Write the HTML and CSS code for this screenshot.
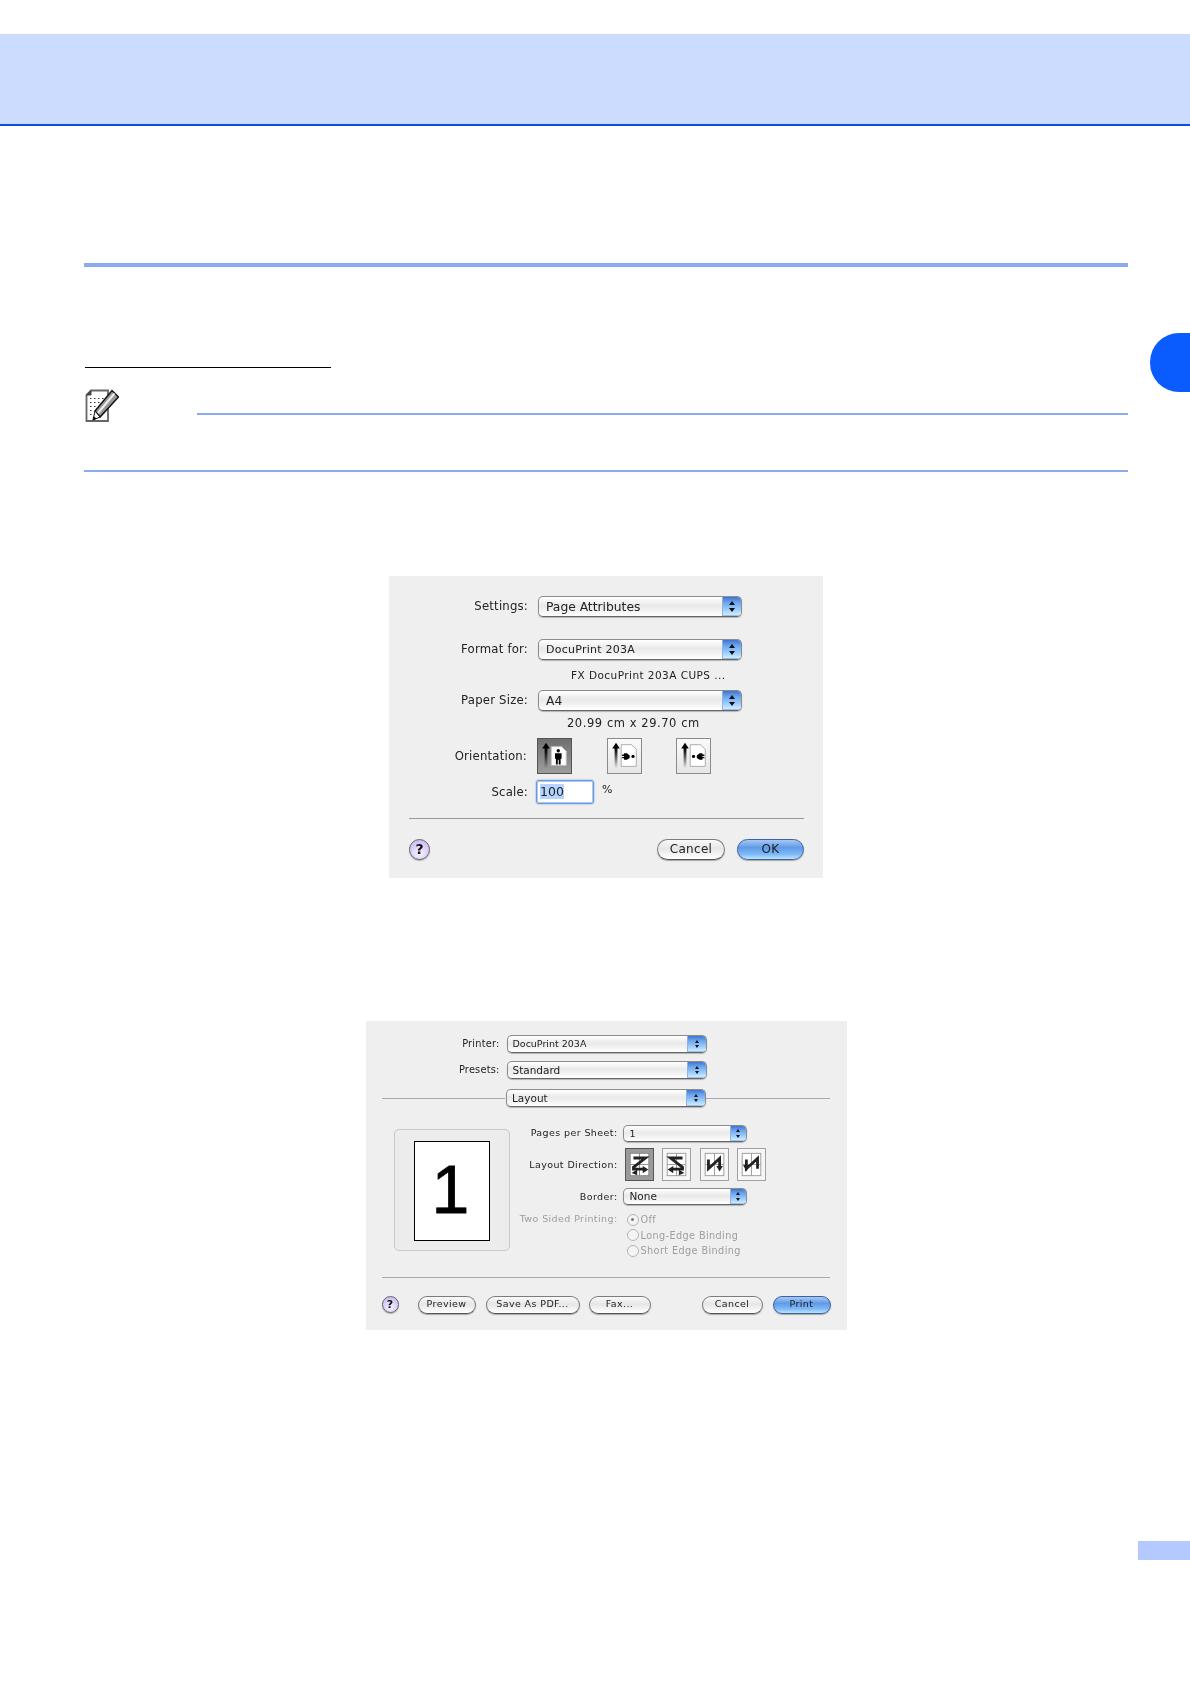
FILE: index.html
```html
<!DOCTYPE html>
<html lang="en">
<head>
<meta charset="utf-8">
<title>Page Setup and Print dialogs</title>
<link rel="stylesheet" href="styles.css">
</head>
<body>
<div class="page">
  <header class="banner"></header>
  <div class="side-tab"></div>
  <main class="content">
    <div class="rule-major"></div>
    <div class="heading-line"></div>
    <div class="note">
      <svg class="note-icon" viewBox="0 0 34 34" width="34" height="34">
        <path d="M6 1.500H23V32H1.500V6Z" fill="#fff" stroke="#666" stroke-width="1.800"/>
        <path d="M1.500 6H6V1.500Z" fill="#444" stroke="#444"/>
        <path d="M5 9.500h1.500M9 9.500h1.500M13 9.500h1.500M17 9.500h1.500M5 13.500h1.500M9 13.500h1.500M13 13.500h1.500M5 17.500h1.500M9 17.500h1.500M5 21.500h1.500M5 25.500h1.500" stroke="#333" stroke-width="1.200"/>
        <path d="M10 22L27 1.500L33.500 8L15 28Z" fill="#999" stroke="#111" stroke-width="1.500"/>
        <path d="M13 24L29.500 4.500" stroke="#eee" stroke-width="2"/>
        <path d="M10 22L15 28L8 31Z" fill="#fff" stroke="#111" stroke-width="1"/>
        <path d="M9 27.500L11.500 29.500L7.500 31.500Z" fill="#000"/>
      </svg>
      <div class="note-line"></div>
    </div>
    <div class="rule-minor"></div>

    <section class="dialog dialog-setup">
      <div class="row row-setup">
        <span class="label">Settings:</span>
        <div class="select select-lg"><span class="select-text">Page Attributes</span><span class="stepper"></span></div>
      </div>
      <div class="row row-setup row-format">
        <span class="label">Format for:</span>
        <div class="select select-lg select-thin"><span class="select-text">DocuPrint 203A</span><span class="stepper"></span></div>
      </div>
      <div class="printer-desc">FX DocuPrint 203A CUPS ...</div>
      <div class="row row-setup">
        <span class="label">Paper Size:</span>
        <div class="select select-lg"><span class="select-text">A4</span><span class="stepper"></span></div>
      </div>
      <div class="paper-desc">20.99 cm x 29.70 cm</div>
      <div class="row row-setup">
        <span class="label label-orient">Orientation:</span>
        <div class="orient-group">
          <svg class="orient orient-on" viewBox="0 0 35 36" width="35" height="36">
            <defs>
              <linearGradient id="fade" x1="0" y1="0" x2="0" y2="1"><stop offset="0.25" stop-color="#000"/><stop offset="1" stop-color="#000" stop-opacity="0"/></linearGradient>
            </defs>
            <path d="M7 31V10H4.500L8.500 4 12.500 10H10V31Z" fill="url(#fade)"/>
            <path d="M14 8H25L30 13V28H14Z" fill="#fff" stroke="#bbb"/>
            <circle cx="21.500" cy="12.500" r="1.800"/>
            <path d="M18 15H25V21H24V27H22V22H21V27H19V21H18Z"/>
          </svg>
          <svg class="orient" viewBox="0 0 35 36" width="35" height="36">
            <path d="M7 31V10H4.500L8.500 4 12.500 10H10V31Z" fill="url(#fade)"/>
            <path d="M14 6H25L30 11V29H14Z" fill="#fff" stroke="#aaa"/>
            <path d="M17 15H20L23 17.500V20L20 22H17V20.500H15V19H17V18H15V16.500H17Z"/>
            <circle cx="26.500" cy="18.500" r="1.700"/>
          </svg>
          <svg class="orient" viewBox="0 0 35 36" width="35" height="36">
            <path d="M7 31V10H4.500L8.500 4 12.500 10H10V31Z" fill="url(#fade)"/>
            <path d="M14 6H25L30 11V29H14Z" fill="#fff" stroke="#aaa"/>
            <path d="M27 15H24L21 17.500V20L24 22H27V20.500H29V19H27V18H29V16.500H27Z"/>
            <circle cx="17.500" cy="18.500" r="1.700"/>
          </svg>
        </div>
      </div>
      <div class="row row-setup row-scale">
        <span class="label label-scale">Scale:</span>
        <div class="scale-input"><span class="selection">100</span></div>
        <span class="percent">%</span>
      </div>
      <div class="separator sep-setup"></div>
      <div class="footer footer-setup">
        <span class="help help-lg">?</span>
        <span class="btn btn-lg btn-push">Cancel</span>
        <span class="btn btn-lg btn-default">OK</span>
      </div>
    </section>

    <section class="dialog dialog-print">
      <div class="row row-print">
        <span class="label">Printer:</span>
        <div class="select select-md select-thin"><span class="select-text">DocuPrint 203A</span><span class="stepper"></span></div>
      </div>
      <div class="row row-print row-presets">
        <span class="label">Presets:</span>
        <div class="select select-md"><span class="select-text">Standard</span><span class="stepper"></span></div>
      </div>
      <div class="pane-row">
        <span class="pane-line"></span>
        <div class="select select-md"><span class="select-text">Layout</span><span class="stepper"></span></div>
        <span class="pane-line"></span>
      </div>
      <div class="layout-body">
        <div class="preview"><div class="sheet">1</div></div>
        <div class="layout-form">
          <div class="row row-layout row-pages">
            <span class="label">Pages per Sheet:</span>
            <div class="select select-sm select-thin"><span class="select-text">1</span><span class="stepper"></span></div>
          </div>
          <div class="row row-layout row-dir">
            <span class="label">Layout Direction:</span>
            <div class="dir-group">
              <svg class="dir dir-on" viewBox="0 0 29 33" width="29" height="33">
                <rect x="4.500" y="4.500" width="20" height="24" fill="#fff" stroke="#888"/><path d="M14.500 4.500V28.500M4.500 16.500H24.500" stroke="#888"/>
                <path d="M8 9.500H21L8 19.500V21.500H19" fill="none" stroke="#222" stroke-width="3"/><path d="M18 18L24 22 18 26ZM12 22L6 25.500 12 28Z" fill="#222"/>
              </svg>
              <svg class="dir" viewBox="0 0 29 33" width="29" height="33">
                <rect x="4.500" y="4.500" width="20" height="24" fill="#fff" stroke="#999"/><path d="M14.500 4.500V28.500M4.500 16.500H24.500" stroke="#999"/>
                <path d="M21 9.500H8L21 19.500V21.500H10" fill="none" stroke="#222" stroke-width="3"/><path d="M11 18L5 22 11 26ZM17 22L23 25.500 17 28Z" fill="#222"/>
              </svg>
              <svg class="dir" viewBox="0 0 29 33" width="29" height="33">
                <rect x="4.500" y="4.500" width="20" height="24" fill="#fff" stroke="#999"/><path d="M14.500 4.500V28.500M4.500 16.500H24.500" stroke="#999"/>
                <path d="M8 11V21L20 10V20" fill="none" stroke="#222" stroke-width="3"/><path d="M16.500 18H23.500L20 24Z" fill="#222"/>
              </svg>
              <svg class="dir" viewBox="0 0 29 33" width="29" height="33">
                <rect x="4.500" y="4.500" width="20" height="24" fill="#fff" stroke="#999"/><path d="M14.500 4.500V28.500M4.500 16.500H24.500" stroke="#999"/>
                <path d="M21 21V10L9 21V11" fill="none" stroke="#222" stroke-width="3"/><path d="M5.500 18H12.500L9 25Z" fill="#222" transform="translate(0 -1)"/>
              </svg>
            </div>
          </div>
          <div class="row row-layout row-border">
            <span class="label">Border:</span>
            <div class="select select-sm"><span class="select-text">None</span><span class="stepper"></span></div>
          </div>
          <div class="row row-layout row-duplex">
            <span class="label label-off">Two Sided Printing:</span>
            <div class="radio-list">
              <div class="radio-item"><span class="radio radio-on"></span>Off</div>
              <div class="radio-item"><span class="radio"></span>Long-Edge Binding</div>
              <div class="radio-item"><span class="radio"></span>Short Edge Binding</div>
            </div>
          </div>
        </div>
      </div>
      <div class="separator sep-print"></div>
      <div class="footer footer-print">
        <span class="help help-sm">?</span>
        <span class="btn btn-sm btn-preview">Preview</span>
        <span class="btn btn-sm btn-pdf">Save As PDF...</span>
        <span class="btn btn-sm btn-fax">Fax...</span>
        <span class="btn btn-sm btn-cancel">Cancel</span>
        <span class="btn btn-sm btn-print btn-default">Print</span>
      </div>
    </section>
  </main>
  <div class="page-tab"></div>
</div>
</body>
</html>
```

FILE: styles.css
```css
* { box-sizing: border-box; }
html, body { margin: 0; background: #fff; }
.page {
  position: relative;
  width: 1190px;
  height: 1684px;
  overflow: hidden;
  padding-top: 34px;
  font-family: "DejaVu Sans", sans-serif;
  color: #222;
}
.banner {
  height: 92px;
  background: #cbdcff;
  border-bottom: 2px solid #0b4fe0;
}
.side-tab {
  position: absolute;
  top: 333px;
  right: 0;
  width: 40px;
  height: 59px;
  background: #0a5cff;
  border-radius: 29px 0 0 29px;
}
.page-tab {
  position: absolute;
  top: 1541px;
  right: 0;
  width: 52px;
  height: 19px;
  background: #b4c9ff;
}
.content { padding: 137px 62px 0 84px; }
.rule-major { height: 4px; background: #8aacee; }
.heading-line { width: 246px; height: 1px; margin: 100px 0 0 1px; background: #000; }
.note { display: flex; align-items: flex-start; height: 81px; margin-top: 21px; }
.note-icon { flex: none; margin-left: 1px; }
.note-line { flex: 1; height: 2px; margin: 24px 0 0 78px; background: #8aacee; }
.rule-minor { height: 2px; background: #8aacee; }

.dialog {
  margin: 0 auto;
  background: #efefef;
  filter: blur(0.35px);
}
.dialog-setup { width: 434px; height: 302px; margin-top: 104px; padding-top: 20px; font-size: 11.700px; }
.dialog-print { width: 481px; height: 309px; margin-top: 143px; padding-top: 14px; font-size: 9.500px; }

.row { display: flex; align-items: center; }
.label { flex: none; text-align: right; letter-spacing: 0.2px; }
.row-setup .label { width: 139px; margin-right: 10px; padding-bottom: 2px; }
.row-setup .label-orient { width: 138px; margin-right: 10px; padding-bottom: 0; }
.row-setup .label-scale { padding-bottom: 0; }
.row-format { margin-top: 22px; }
.printer-desc { height: 30px; padding-left: 182px; line-height: 30px; font-size: 10.500px; letter-spacing: 0.45px; }
.paper-desc { height: 27px; padding-left: 178px; line-height: 25px; font-size: 11.500px; letter-spacing: 0.55px; }

.select {
  position: relative;
  flex: none;
  display: flex;
  align-items: center;
  border: 1px solid #8c8c8c;
  border-bottom-color: #666;
  border-radius: 5px;
  background: linear-gradient(#fff 0, #e9e9e9 45%, #f2f2f2 70%, #fff 100%);
  box-shadow: 0 1px 1px rgba(0, 0, 0, 0.25);
  overflow: hidden;
}
.select-lg { width: 204px; height: 21px; font-size: 12.300px; }
.select-md { width: 200px; height: 18px; font-size: 10.500px; }
.select-sm { width: 124px; height: 17px; font-size: 10.500px; }
.select-thin { font-size: 11px; letter-spacing: 0.25px; }
.select-md.select-thin, .select-sm.select-thin { font-size: 9.500px; letter-spacing: 0; }
.select-text { flex: 1; padding-left: 7px; white-space: nowrap; }
.select-md .select-text { padding: 0 0 1px 5px; }
.select-sm .select-text { padding: 0 0 1px 6px; }
.stepper {
  position: relative;
  flex: none;
  align-self: stretch;
  width: 19px;
  border-left: 1px solid #8fb4e8;
  background: linear-gradient(#3f74cf 0, #6ea6ee 30%, #9accfb 65%, #cbe9ff 92%, #7fa8e0 100%);
}
.select-sm .stepper { width: 16px; }
.stepper::before, .stepper::after {
  content: "";
  position: absolute;
  left: 50%;
  margin-left: -3px;
  border-left: 3px solid transparent;
  border-right: 3px solid transparent;
}
.stepper::before { top: 22%; border-bottom: 4px solid #111; }
.stepper::after { bottom: 22%; border-top: 4px solid #111; }
.select-md .stepper::before, .select-md .stepper::after,
.select-sm .stepper::before, .select-sm .stepper::after { margin-left: -2px; border-left-width: 2px; border-right-width: 2px; }
.select-md .stepper::before, .select-sm .stepper::before { border-bottom-width: 3px; }
.select-md .stepper::after, .select-sm .stepper::after { border-top-width: 3px; }

.orient-group { display: flex; gap: 34.500px; }
.orient {
  flex: none;
  border: 1px solid #8a8a8a;
  background: linear-gradient(#fafafa, #e6e6e6);
}
.orient-on { border-color: #555; background: linear-gradient(#707070, #9c9c9c); }
.row-scale { margin-top: 6px; height: 24px; }
.scale-input {
  width: 58px;
  height: 24px;
  margin-left: -2px;
  padding: 3px 0 0 3px;
  background: #fff;
  border: 1px solid #6d9ad6;
  box-shadow: inset 0 0 0 1px #a9c9ef, 0 0 2px #6fa0e0;
  border-radius: 3px;
  font-size: 12.500px;
  line-height: 16px;
}
.selection { background: #b5d5ff; }
.percent { margin: -5px 0 0 8px; font-size: 11px; }

.separator { height: 1px; background: #999; }
.sep-setup { margin: 14px 19px 0 20px; }
.footer { display: flex; align-items: center; }
.footer-setup { margin: 20px 19px 0 20px; }
.help {
  flex: none;
  border: 1px solid #666;
  border-radius: 50%;
  background: radial-gradient(circle at 50% 70%, #f2ecff 10%, #c9b8f5 85%);
  box-shadow: 0 1px 1px rgba(0, 0, 0, 0.3);
  text-align: center;
  font-weight: 700;
  color: #111;
}
.help-lg { width: 21px; height: 21px; font-size: 14px; line-height: 19px; }
.help-sm { width: 17px; height: 17px; font-size: 11px; line-height: 15px; }
.btn {
  flex: none;
  border: 1px solid #7c7c7c;
  border-bottom-color: #555;
  border-radius: 11px;
  background: linear-gradient(#fafafa 0, #e6e6e6 45%, #f4f4f4 75%, #fff 100%);
  box-shadow: 0 1px 1px rgba(0, 0, 0, 0.3);
  text-align: center;
  white-space: nowrap;
}
.btn-lg { width: 68px; height: 21px; font-size: 12px; line-height: 19px; letter-spacing: 0.3px; }
.btn-push { margin-left: auto; }
.btn-lg.btn-default { width: 67px; margin-left: 12px; }
.btn-default {
  border-color: #3a62a8;
  background: linear-gradient(#a9c8f0 0, #5f9ae8 40%, #7fbaf6 75%, #bfe4ff 100%);
}
.btn-sm { height: 18px; font-size: 9.500px; line-height: 14px; letter-spacing: 0.4px; }
.btn-preview { width: 58px; margin-left: 19px; }
.btn-pdf { width: 94px; margin-left: 10px; }
.btn-fax { width: 62px; margin-left: 9px; }
.btn-cancel { width: 61px; margin-left: auto; }
.btn-print { width: 58px; margin-left: 10px; }

.row-print .label { width: 134px; margin-right: 7px; padding-bottom: 2px; font-size: 9.800px; }
.row-presets { margin-top: 8px; }
.pane-row { display: flex; align-items: center; margin: 10px 17px 0 16px; }
.pane-row .select { margin-left: 1px; }
.pane-line { flex: 1; height: 1px; background: #aaa; }
.layout-body { display: flex; align-items: flex-start; margin-top: 18px; padding-left: 28px; }
.preview {
  flex: none;
  display: flex;
  justify-content: center;
  width: 116px;
  height: 122px;
  margin-top: 4px;
  padding-top: 11px;
  border: 1px solid #c9c9c9;
  border-radius: 5px;
  background: #ececec;
}
.sheet {
  width: 76px;
  height: 100px;
  border: 1px solid #000;
  background: #fff;
  text-align: center;
  font-family: "Liberation Sans", sans-serif;
  font-size: 68px;
  line-height: 94px;
  color: #000;
  padding-right: 2px;
  -webkit-text-stroke: 0.8px #000;
}
.row-layout .label { width: 108px; margin-right: 5px; padding-bottom: 1px; letter-spacing: 0.4px; }
.row-layout.row-pages .label { padding-bottom: 3px; }
.row-dir { margin-top: 6px; }
.row-border { margin-top: 7px; }
.row-duplex { align-items: flex-start; margin-top: 7px; }
.label-off { color: #9d9d9d; padding-top: 1px; }
.dir-group { display: flex; gap: 8.500px; margin-left: 2px; }
.dir { flex: none; border: 1px solid #a0a0a0; background: #f6f6f6; }
.dir-on { border-color: #555; background: #9a9a9a; }
.radio-list { margin-left: 4px; color: #9d9d9d; letter-spacing: 0.4px; font-size: 9.700px; }
.radio-item { display: flex; align-items: center; gap: 2px; height: 15.500px; white-space: nowrap; }
.radio {
  flex: none;
  display: flex;
  align-items: center;
  justify-content: center;
  width: 12px;
  height: 12px;
  border: 1px solid #b5b5b5;
  border-radius: 50%;
  background: #f4f4f4;
}
.radio-on::after { content: ""; width: 3px; height: 3px; border-radius: 50%; background: #777; }
.sep-print { margin: 18px 17px 0 16px; background: #aaa; }
.footer-print { margin: 18px 16px 0 16px; }
```
